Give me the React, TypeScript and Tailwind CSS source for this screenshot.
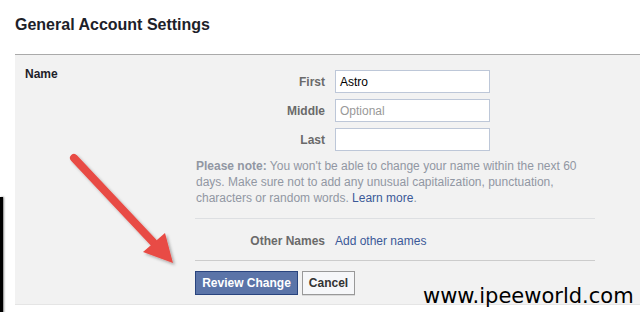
import React from 'react';

function NameRow({ label, value, placeholder }: { label: string; value?: string; placeholder?: string }) {
  return (
    <div className="flex items-center">
      <div className="w-[130px] text-right text-[12px] font-bold text-[#6a6a6a] leading-[16px]">{label}</div>
      <div className="ml-[10px] w-[155px] h-[23px] border border-[#bdc7d8] bg-white px-[4px] flex items-center text-[12px]">
        {value ? (
          <span className="text-black">{value}</span>
        ) : (
          <span className="text-[#999]">{placeholder}</span>
        )}
      </div>
    </div>
  );
}

function Arrow() {
  return (
    <svg className="absolute left-0 top-0" width="200" height="290" viewBox="0 0 200 290">
      <defs>
        <filter id="sh" x="-20%" y="-20%" width="140%" height="140%">
          <feDropShadow dx="2" dy="2" stdDeviation="1.5" floodColor="#000" floodOpacity="0.3" />
        </filter>
      </defs>
      <g filter="url(#sh)">
        <line x1="74" y1="158" x2="153" y2="242" stroke="#e84b45" strokeWidth="8" strokeLinecap="round" />
        <polygon points="143,252 165,233 173,263" fill="#e84b45" />
      </g>
    </svg>
  );
}

export default function App() {
  return (
    <div
      className="relative w-[640px] h-[312px] overflow-hidden bg-white"
      style={{ fontFamily: '"Liberation Sans", Arial, sans-serif' }}
    >
      <div className="h-[54px] pl-[15px] pt-[15px] text-[16px] leading-[20px] font-bold text-[#1d2129]">
        General Account Settings
      </div>

      <div className="ml-[15px] bg-[#f2f2f2] border-t border-[#aaa] border-b border-b-[#e5e5e5] flex">
        <div className="w-[180px] pl-[10px] pt-[11px] text-[12px] font-bold leading-[16px] text-[#1d2129]">Name</div>

        <div className="w-[400px] pt-[15px] pb-[9px]">
          <div className="flex flex-col gap-[6px]">
            <NameRow label="First" value="Astro" />
            <NameRow label="Middle" placeholder="Optional" />
            <NameRow label="Last" />
          </div>

          <p className="mt-[7px] pl-[1px] pr-[8px] text-[12px] leading-[16px] text-[#9197a3]">
            <b>Please note:</b> You won't be able to change your name within the next 60 days. Make sure not to add any unusual capitalization, punctuation, characters or random words. <a className="text-[#3b5998]">Learn more</a>.
          </p>

          <div className="mt-[12px] border-t border-[#dddfe2] h-[42px] pt-[2px] flex items-center">
            <div className="w-[130px] text-right text-[12px] font-bold text-[#6a6a6a]">Other Names</div>
            <div className="ml-[10px] text-[12px] text-[#3b5998]">Add other names</div>
          </div>

          <div className="border-t border-[#ccc] pt-[10px] flex gap-[4px]">
            <button className="h-[24px] w-[103px] bg-[#5b74a8] border border-[#29447e] text-white text-[12px] font-bold">
              Review Change
            </button>
            <button className="h-[24px] w-[53px] bg-[#f6f7f9] border border-[#999] text-[#333] text-[12px] font-bold shadow-[0_1px_0_rgba(0,0,0,0.1)]">
              Cancel
            </button>
          </div>
        </div>
      </div>

      <Arrow />

      <div className="absolute left-0 top-[197px] w-[3px] h-[120px] bg-black shadow-[1px_0_2px_rgba(0,0,0,0.5)]" />

      <div
        className="absolute left-[423px] top-[284px] text-[21px] leading-[25px] text-black"
        style={{ fontFamily: '"DejaVu Sans", Verdana, sans-serif' }}
      >
        www.ipeeworld.com
      </div>
    </div>
  );
}
